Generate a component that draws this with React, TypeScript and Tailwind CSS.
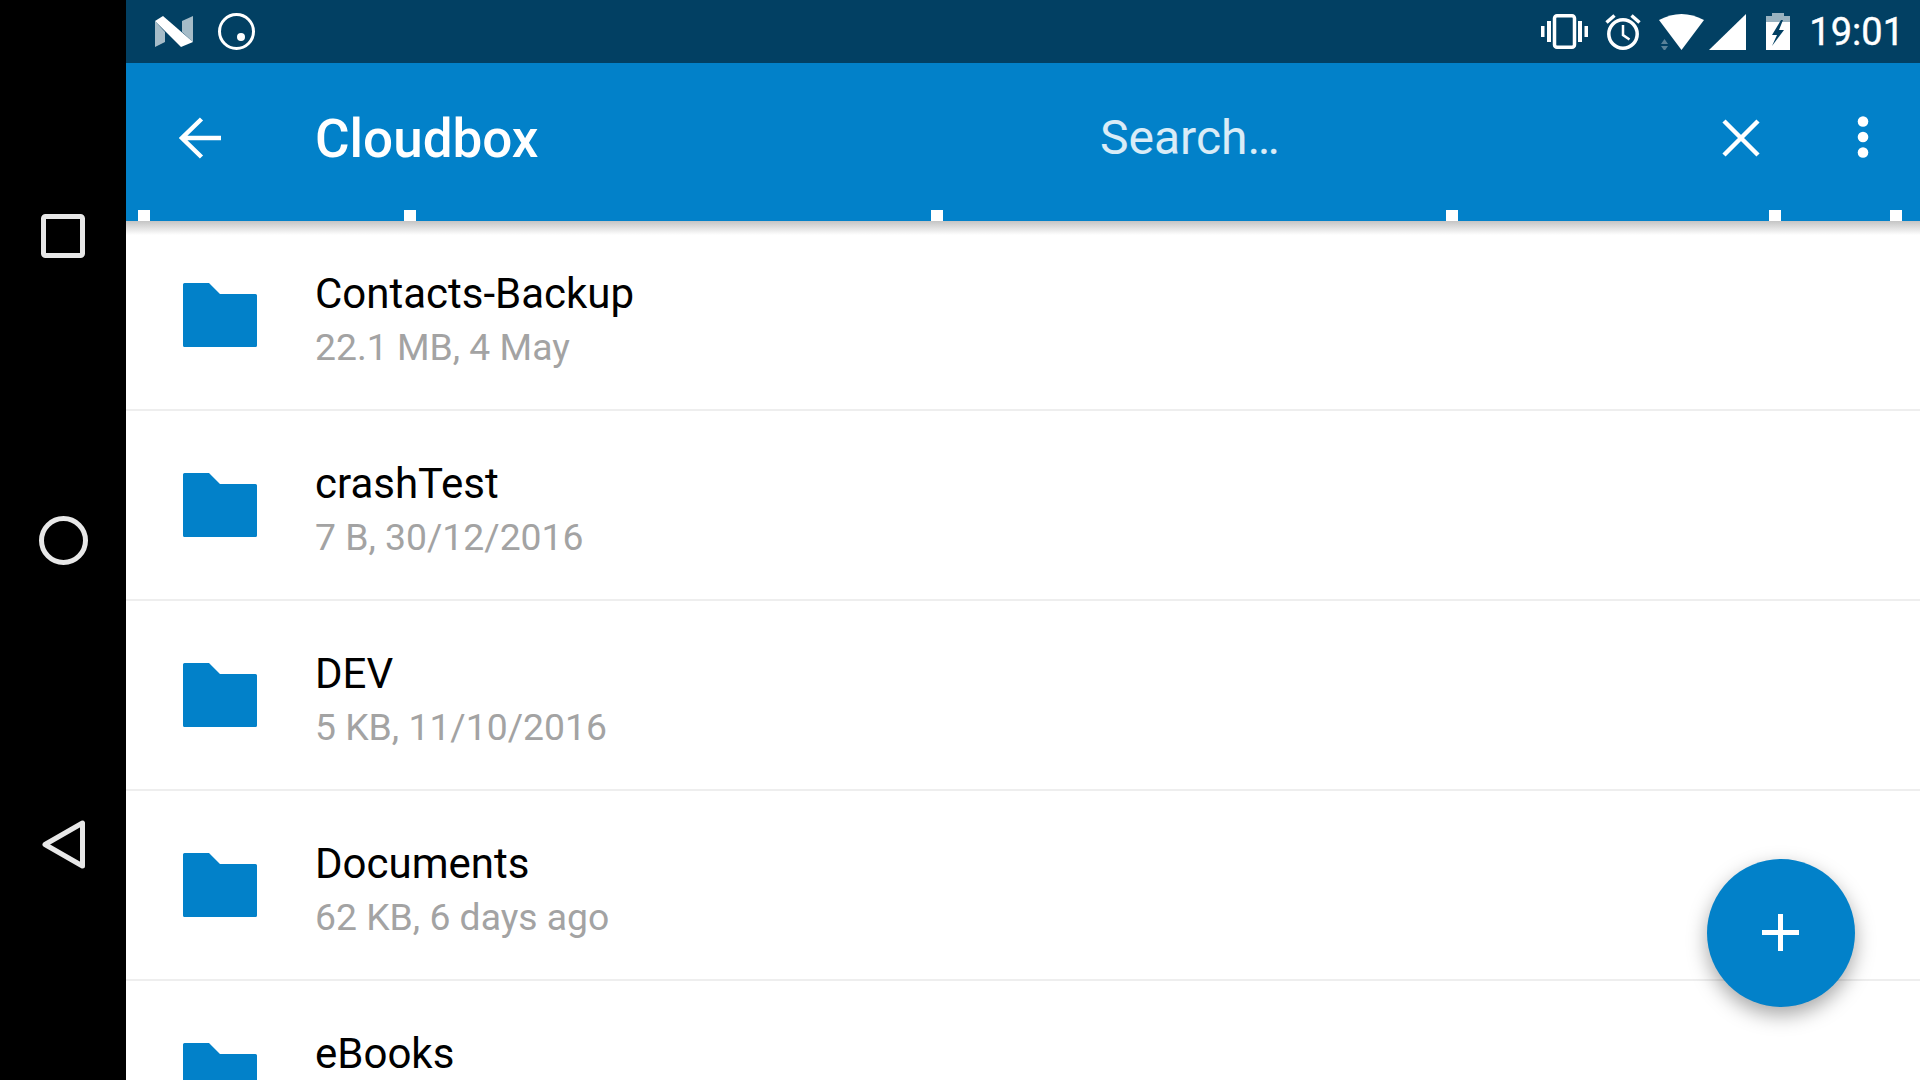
const folders = [
  { name: "Contacts-Backup", meta: "22.1 MB, 4 May" },
  { name: "crashTest", meta: "7 B, 30/12/2016" },
  { name: "DEV", meta: "5 KB, 11/10/2016" },
  { name: "Documents", meta: "62 KB, 6 days ago" },
  { name: "eBooks", meta: "" },
];

const handles = ["left-[12px]", "left-[278px]", "left-[805px]", "left-[1320px]", "left-[1643px]", "left-[1764px]"];

function NavBar() {
  return (
    <aside className="w-[126px] shrink-0 bg-black grid grid-rows-3 py-[84px] justify-items-center items-center">
      <svg width="44" height="44" viewBox="0 0 44 44" fill="none" stroke="#e8e8e8" strokeWidth="5">
        <rect x="2.5" y="2.5" width="39" height="39" rx="2" />
      </svg>
      <svg width="49" height="49" viewBox="0 0 49 49" fill="none" stroke="#e8e8e8" strokeWidth="5">
        <circle cx="24.5" cy="24.5" r="22" />
      </svg>
      <svg width="43" height="49" viewBox="0 0 43 49" fill="none" stroke="#e8e8e8" strokeWidth="5" strokeLinejoin="round">
        <path d="M3 24.5 L40.5 3 V46 Z" />
      </svg>
    </aside>
  );
}

function StatusBar() {
  return (
    <div className="h-[63px] shrink-0 bg-[#024063] flex items-center pl-[28px] pr-[16px] text-white">
      <svg width="39" height="31" viewBox="0 0 39 31" fill="white">
        <path d="M1 5 L11 16 V26 L1 31 Z" opacity="0.65" />
        <path d="M39 0 V26 L28 16 V5 Z" opacity="0.65" />
        <path d="M1 5 L9 0 L39 26 L27 31 Z" />
      </svg>
      <svg className="ml-[25px]" width="37" height="37" viewBox="0 0 37 37" fill="none">
        <circle cx="18.5" cy="18.5" r="17" stroke="white" strokeWidth="3" />
        <circle cx="23" cy="24" r="4" fill="white" />
      </svg>
      <div className="ml-auto flex items-center">
        <svg width="47" height="35" viewBox="0 0 47 35" fill="white">
          <rect x="0" y="12" width="3.5" height="11" />
          <rect x="6" y="7" width="4" height="21" />
          <rect x="37" y="7" width="4" height="21" />
          <rect x="43.5" y="12" width="3.5" height="11" />
          <rect x="13.5" y="1.75" width="20" height="31.5" rx="2.5" fill="none" stroke="white" strokeWidth="3.5" />
        </svg>
        <svg className="ml-[17px]" width="36" height="37" viewBox="0 0 36 37" fill="none" stroke="white">
          <circle cx="18" cy="21" r="14.2" strokeWidth="3.5" />
          <path d="M18 12 V22 L24.5 26.5" strokeWidth="2.5" />
          <path d="M1.5 9.5 L9.5 2.5 M34.5 9.5 L26.5 2.5" strokeWidth="3.5" />
        </svg>
        <svg className="ml-[18px]" width="45" height="36" viewBox="0 0 45 36">
          <path d="M0 6 Q22.5 -6 45 6 L22.5 36 Z" fill="white" />
          <path d="M2 30 L5.5 25 L9 30 Z M2 32 L5.5 37 L9 32 Z" fill="white" opacity="0.35" />
        </svg>
        <svg className="ml-[5px]" width="37" height="36" viewBox="0 0 37 36" fill="white">
          <path d="M0 36 L37 0 V36 Z" />
        </svg>
        <svg className="ml-[20px]" width="24" height="37" viewBox="0 0 24 37" fill="white">
          <path d="M6 0 H18 V3 H24 V9 H0 V3 H6 Z" opacity="0.6" />
          <path d="M0 9 H24 V37 H0 Z" />
          <path d="M15 7 L6 22 H11 L6 33 L18 17 H13 L17 7 Z" fill="#024063" />
        </svg>
        <span className="ml-[19px] font-['Roboto',sans-serif] text-[38px] leading-none [-webkit-text-stroke:0.4px_white]">19:01</span>
      </div>
    </div>
  );
}

function AppBar() {
  return (
    <header className="relative h-[158px] shrink-0 bg-[#0281c9] flex items-center pb-[9px] text-white font-['Roboto',sans-serif]">
      <svg className="ml-[53px]" width="42" height="42" viewBox="0 0 42 42" fill="none" stroke="white" strokeWidth="4.5">
        <path d="M42 21 H3 M22.5 2 L3 21 L22.5 40" />
      </svg>
      <h1 className="ml-[94px] w-[785px] pt-[4px] text-[53px] font-medium leading-none">Cloudbox</h1>
      <span className="text-[48px] leading-none text-white/85">Search…</span>
      <svg className="ml-auto" width="38" height="38" viewBox="0 0 38 38" fill="none" stroke="white" strokeWidth="4.5">
        <path d="M2 2 L36 36 M36 2 L2 36" />
      </svg>
      <svg className="ml-[97px] mr-[51px] -mt-[1px]" width="12" height="42" viewBox="0 0 12 42" fill="white">
        <circle cx="6" cy="5.5" r="5.3" />
        <circle cx="6" cy="21" r="5.3" />
        <circle cx="6" cy="36.5" r="5.3" />
      </svg>
      {handles.map((pos) => (
        <span key={pos} className={`absolute top-[147px] w-[12px] h-[11px] bg-white ${pos}`} />
      ))}
      <div className="absolute top-full left-0 right-0 h-[14px] bg-gradient-to-b from-[#c4c4c4] to-white" />
    </header>
  );
}

function FolderRow({ name, meta }: { name: string; meta: string }) {
  return (
    <div className="h-[190px] shrink-0 flex items-center border-b-2 border-[#eeeeee] pl-[57px]">
      <svg width="74" height="64" viewBox="0 0 74 64" fill="#0281c9">
        <path d="M1.5 0 H26 L37 11 H72.5 A1.5 1.5 0 0 1 74 12.5 V62.5 A1.5 1.5 0 0 1 72.5 64 H1.5 A1.5 1.5 0 0 1 0 62.5 V1.5 A1.5 1.5 0 0 1 1.5 0 Z" />
      </svg>
      <div className="ml-[58px] pt-[10px] font-['Roboto',sans-serif]">
        <div className="text-[42px] leading-[54px] text-black">{name}</div>
        <div className="h-[54px] -mt-[1px] text-[37.3px] leading-[54px] text-[#a3a3a3]">{meta}</div>
      </div>
    </div>
  );
}

export default function App() {
  return (
    <div className="w-[1920px] h-[1080px] flex overflow-hidden bg-white">
      <NavBar />
      <main className="relative flex-1 flex flex-col overflow-hidden">
        <StatusBar />
        <AppBar />
        {folders.map((f) => (
          <FolderRow key={f.name} name={f.name} meta={f.meta} />
        ))}
        <button className="absolute left-[1581px] top-[859px] w-[148px] h-[148px] rounded-full bg-[#0281c9] shadow-[0_8px_20px_rgba(0,0,0,0.35)] flex items-center justify-center">
          <svg className="-ml-[1px] -mt-[1px]" width="37" height="37" viewBox="0 0 37 37" fill="white">
            <rect x="16" y="0" width="5" height="37" />
            <rect x="0" y="16" width="37" height="5" />
          </svg>
        </button>
      </main>
    </div>
  );
}
